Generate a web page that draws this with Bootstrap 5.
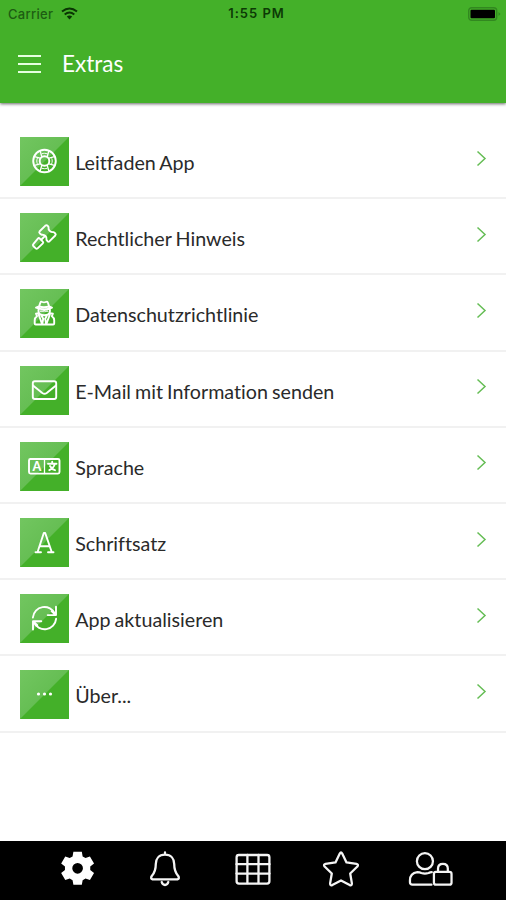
<!DOCTYPE html>
<html lang="de">
<head>
<meta charset="utf-8">
<meta name="viewport" content="width=device-width, initial-scale=1">
<title>Extras</title>
<link href="https://cdn.jsdelivr.net/npm/bootstrap@5.3.0/dist/css/bootstrap.min.css" rel="stylesheet">
<style>
  body { font-family: Lato, sans-serif; color: #222; background: #fff; }
  .screen { height: 900px; overflow: hidden; }
  .app-header { height: 103px; background: #44b029; box-shadow: 0 1px 3px rgba(0,0,0,.6); }
  .status-line { height: 27px; padding: 0 5px 0 8px; font: 500 13px/26px Inter, sans-serif; color: #0c3a05; }
  .status-line .carrier { color: #1d5c12; font-weight: 500; letter-spacing: .3px; }
  .status-line .clock { font-weight: 600; letter-spacing: 1px; margin-left: 4px; }
  .title-line { height: 73px; padding-left: 18px; gap: 21px; }
  .title-line h1 { font-size: 22.5px; line-height: 28px; }
  .entries { padding-top: 20px; }
  .entries .entry, .entries .entry:last-child { height: 76.2px; padding: 1px 19px 0 20px; border: 0; border-bottom: 2px solid #f1f1f1; border-radius: 0; color: #2a2a2a; background: #fff; }
  .tile { width: 49px; height: 49px; margin-top: 2px; background: linear-gradient(135deg, #72c660 0, #66be54 49.6%, #44b029 50.4%); }
  .entry-text { font-size: 19.7px; line-height: 26px; margin: 5px 0 0 6.2px; white-space: nowrap; font-variant-ligatures: none; word-spacing: -1px; }
  .line { fill: none; stroke: #fff; stroke-width: 1.9; stroke-linejoin: round; stroke-linecap: round; }
  .chevron { stroke: #65bd55; stroke-width: 1.5; fill: none; margin-top: -5px; }
  .tabs { height: 59px; background: #000; padding: 0 34px 4px; }
  .tabs a { width: 87.7px; }
  .tabs .line { stroke-width: 2.3; stroke: #f4f4f4; }
</style>
<script src="https://cdn.jsdelivr.net/npm/bootstrap@5.3.0/dist/js/bootstrap.bundle.min.js"></script>
</head>
<body>
<div class="screen d-flex flex-column">
  <header class="app-header flex-shrink-0">
    <div class="status-line row g-0">
      <div class="col d-flex align-items-center gap-2"><span class="carrier">Carrier</span>
        <svg width="17" height="13" viewBox="0 0 17 13" fill="none" stroke="#0a3504" stroke-width="2"><path d="M1 4.600Q8.500-1.700 16 4.600M3.700 7.500Q8.500 3.500 13.300 7.500"/><path d="M5.800 9.500Q8.500 7.400 11.200 9.500L8.500 12.400Z" fill="#0a3504" stroke="none"/></svg>
      </div>
      <div class="col-auto"><span class="clock">1:55 PM</span></div>
      <div class="col d-flex align-items-center justify-content-end">
        <svg width="33" height="14" viewBox="0 0 33 14"><rect x=".7" y=".7" width="28" height="12.600" rx="3" fill="none" stroke="#328820" stroke-width="1.400"/><rect x="2.500" y="2.700" width="24.500" height="8.600" rx="1" fill="#000"/><path d="M30.500 5v4l2-2z" fill="#328820"/></svg>
      </div>
    </div>
    <div class="title-line d-flex align-items-center">
      <svg width="23" height="20" viewBox="0 0 23 20" stroke="#e5ffdf" stroke-width="1.900"><path d="M0 2h23M0 10h23M0 18h23"/></svg>
      <h1 class="m-0 text-white fw-normal">Extras</h1>
    </div>
  </header>

  <main class="entries list-group list-group-flush flex-grow-1">
    <a href="#" class="entry list-group-item list-group-item-action d-flex align-items-center">
      <span class="tile"><svg class="line d-block" width="49" height="49" viewBox="0 0 49 49"><circle cx="24.500" cy="24" r="11.300"/><circle cx="24.500" cy="24" r="4.800"/><circle cx="24.500" cy="24" r="7.700" stroke-dasharray="5.300 6.800" stroke-dashoffset="2.650" stroke-width="1"/><path d="m20.200 14 1.500 5.500m7.100-5.500-1.500 5.500m-7.100 14.500 1.500-5.500m7.100 5.500-1.500-5.500M14.500 19.700l5.500 1.500m-5.500 7.100 5.500-1.500m14.500-7.100-5.500 1.500m5.500 7.100-5.500-1.500" stroke-width="1.300"/></svg></span>
      <span class="entry-text">Leitfaden App</span>
      <svg class="chevron ms-auto" width="11" height="17" viewBox="0 0 11 17"><path d="m1.500 1.500 7.500 7-7.500 7"/></svg>
    </a>
    <a href="#" class="entry list-group-item list-group-item-action d-flex align-items-center">
      <span class="tile"><svg class="line d-block" width="49" height="49" viewBox="0 0 49 49"><path d="M19.700 18.200 25.400 12.600q1.200-1 2.300.2l.8 1.300q-.3 2.300 1.200 3.800t4 1.200l1.400 1.200q1.200 1 .2 2.200l-5.700 5.700q-1.200 1-2.100-.1l-1-1.300q.4-2.300-1-3.800t-3.900-1.200l-1.700-1.300q-1.200-1-.2-2.300zM24 24l-2.800 2.800M19.500 25.300l3.300 3.300q.9.900 0 1.800l-5.200 5q-1 .9-1.900 0l-2.400-2.400q-.9-1 0-1.900l4.800-5.700q.6-.8 1.400-.1z"/></svg></span>
      <span class="entry-text">Rechtlicher Hinweis</span>
      <svg class="chevron ms-auto" width="11" height="17" viewBox="0 0 11 17"><path d="m1.500 1.500 7.500 7-7.500 7"/></svg>
    </a>
    <a href="#" class="entry list-group-item list-group-item-action d-flex align-items-center">
      <span class="tile"><svg class="line d-block" width="49" height="49" viewBox="0 0 49 49"><path d="M19 17.500 20.500 13.300q.5-1 1.800-.3 1.700.8 3.400 0 1.500-.7 2 .3l1.500 4.200M19 17.500l-3 1.200q8.500 3.500 16 0l-3-1.200q-5 1.400-10 0zM18.500 20.300v2q0 4 5.700 4t5.700-4v-2M18.500 24.200l-2.500.5 1 2.500q-2.300 1.500-2.300 4v3.300q0 1 1 1h17.500q1 0 1-1v-3.300q0-2.500-2.300-4l1-2.500-2.500-.5M18.800 26l3.400 9.300 1-5.500-1.500-2.800m8-1-3.500 9.300-1-5.500 1.500-2.800"/><path d="M20.500 22.200h3l.7-.8.7.8h3" stroke-width="1.200"/></svg></span>
      <span class="entry-text">Datenschutzrichtlinie</span>
      <svg class="chevron ms-auto" width="11" height="17" viewBox="0 0 11 17"><path d="m1.500 1.500 7.500 7-7.500 7"/></svg>
    </a>
    <a href="#" class="entry list-group-item list-group-item-action d-flex align-items-center">
      <span class="tile"><svg class="line d-block" width="49" height="49" viewBox="0 0 49 49"><rect x="12.800" y="15.200" width="23.400" height="17.800" rx="2"/><path d="m13 19.500 9.300 7.400q2.200 1.600 4.400 0l9.300-7.400"/></svg></span>
      <span class="entry-text">E-Mail mit Information senden</span>
      <svg class="chevron ms-auto" width="11" height="17" viewBox="0 0 11 17"><path d="m1.500 1.500 7.500 7-7.500 7"/></svg>
    </a>
    <a href="#" class="entry list-group-item list-group-item-action d-flex align-items-center">
      <span class="tile"><svg class="line d-block" width="49" height="49" viewBox="0 0 49 49"><rect x="9" y="17" width="30.500" height="14.600" rx="1.500"/><path d="M24.500 17v14.600" stroke-width="1.300"/><text x="16.800" y="28.600" text-anchor="middle" fill="#fff" stroke="none" font-family="Lato, sans-serif" font-weight="900" font-size="12.500">A</text><path d="M28 21.700h8.500M32.200 19.800v1.900M29.300 28.200q4.500-2 5.500-6.300M30 24q1.700 3.300 5 4.200"/></svg></span>
      <span class="entry-text">Sprache</span>
      <svg class="chevron ms-auto" width="11" height="17" viewBox="0 0 11 17"><path d="m1.500 1.500 7.500 7-7.500 7"/></svg>
    </a>
    <a href="#" class="entry list-group-item list-group-item-action d-flex align-items-center">
      <span class="tile"><svg class="line d-block" width="49" height="49" viewBox="0 0 49 49"><path d="M15.500 34.300h5.500M28 34.300h5.500M17.500 34.200l6.300-19.200h1.400l6.600 19.200M19.600 28.200h10"/></svg></span>
      <span class="entry-text">Schriftsatz</span>
      <svg class="chevron ms-auto" width="11" height="17" viewBox="0 0 11 17"><path d="m1.500 1.500 7.500 7-7.500 7"/></svg>
    </a>
    <a href="#" class="entry list-group-item list-group-item-action d-flex align-items-center">
      <span class="tile"><svg class="line d-block" width="49" height="49" viewBox="0 0 49 49"><path d="M12.900 23.500A11.600 11.600 0 0 1 35 19.800M36.100 24.800A11.600 11.600 0 0 1 14 28.500M36 12.800v8.300h-8.300M13 35.500v-8.200h8.300M35.500 20.800l-3.800-3.500M13.500 27.800l3.800 3.500"/></svg></span>
      <span class="entry-text">App aktualisieren</span>
      <svg class="chevron ms-auto" width="11" height="17" viewBox="0 0 11 17"><path d="m1.500 1.500 7.500 7-7.500 7"/></svg>
    </a>
    <a href="#" class="entry list-group-item list-group-item-action d-flex align-items-center">
      <span class="tile"><svg class="d-block" width="49" height="49" viewBox="0 0 49 49" fill="#fff"><circle cx="18.500" cy="24" r="1.600"/><circle cx="24.500" cy="24" r="1.600"/><circle cx="30.500" cy="24" r="1.600"/></svg></span>
      <span class="entry-text">Über...</span>
      <svg class="chevron ms-auto" width="11" height="17" viewBox="0 0 11 17"><path d="m1.500 1.500 7.500 7-7.500 7"/></svg>
    </a>
  </main>

  <nav class="tabs d-flex align-items-center flex-shrink-0">
    <a href="#" aria-label="Einstellungen" class="d-flex justify-content-center"><svg width="37" height="37" viewBox="0 0 36 36" fill="#fff"><path fill-rule="evenodd" d="M14 1.700h8.200l.8 4.600 2.800 1.600 4.300-1.600 4 6.900L30.400 16v3.500l3.700 2.900-4 6.800-4.300-1.500-2.800 1.700-.8 4.400H14l-.8-4.400-2.800-1.700-4.300 1.500-4-6.800 3.700-2.900V16l-3.700-2.800 4-6.900 4.300 1.600 2.800-1.600zM18.100 12.600a5.200 5.200 0 1 0 0 10.400 5.200 5.200 0 0 0 0-10.400z"/></svg></a>
    <a href="#" aria-label="Mitteilungen" class="d-flex justify-content-center"><svg class="line" width="36" height="36" viewBox="0 0 36 36"><path d="M18 1.500v2.200M18 3.700c-6.200 0-9.200 4.200-9.200 9.300 0 7-1.600 9.300-4 12q-1.700 2.600.8 3.300h24.800q2.500-.7.800-3.300c-2.400-2.700-4-5-4-12 0-5.100-3-9.300-9.200-9.300zM14.700 31q.8 2.900 3.300 3 2.500-.1 3.300-3"/></svg></a>
    <a href="#" aria-label="Übersicht" class="d-flex justify-content-center"><svg class="line" width="36" height="36" viewBox="0 0 36 36"><rect x="1.600" y="4" width="32.800" height="28.600" rx="2.300"/><path d="M12.400 4v28M23.500 4v28M1.500 13.200h33M1.500 22.600h33"/></svg></a>
    <a href="#" aria-label="Favoriten" class="d-flex justify-content-center"><svg class="line" width="38" height="36" viewBox="0 0 38 36"><path d="M17.800 2.600q1.200-2.200 2.400 0l4.300 8.800 10 1.400q2.400.6.900 2.700l-7.200 7 1.700 9.900q.1 2.400-2.200 1.700L19 29.500l-8.700 4.600q-2.300.7-2.200-1.700l1.700-9.900-7.200-7q-1.500-2.100.9-2.700l10-1.400z"/></svg></a>
    <a href="#" aria-label="Anmelden" class="d-flex justify-content-center ps-1"><svg class="line" width="45" height="36" viewBox="0 0 46 36"><circle cx="17.300" cy="10" r="8.200"/><path d="M24 34H4.500Q2 34 2 31.500v-1.700q0-7.500 7.600-8.500 2.400 0 4 .8 3.700 1.100 7.400 0 1.600-.8 3.300-.8"/><rect x="26.500" y="21" width="18" height="13" rx="2"/><path d="M30.700 21v-3.500q0-4.800 5-4.800t5 4.800V21"/></svg></a>
  </nav>
</div>
</body>
</html>
